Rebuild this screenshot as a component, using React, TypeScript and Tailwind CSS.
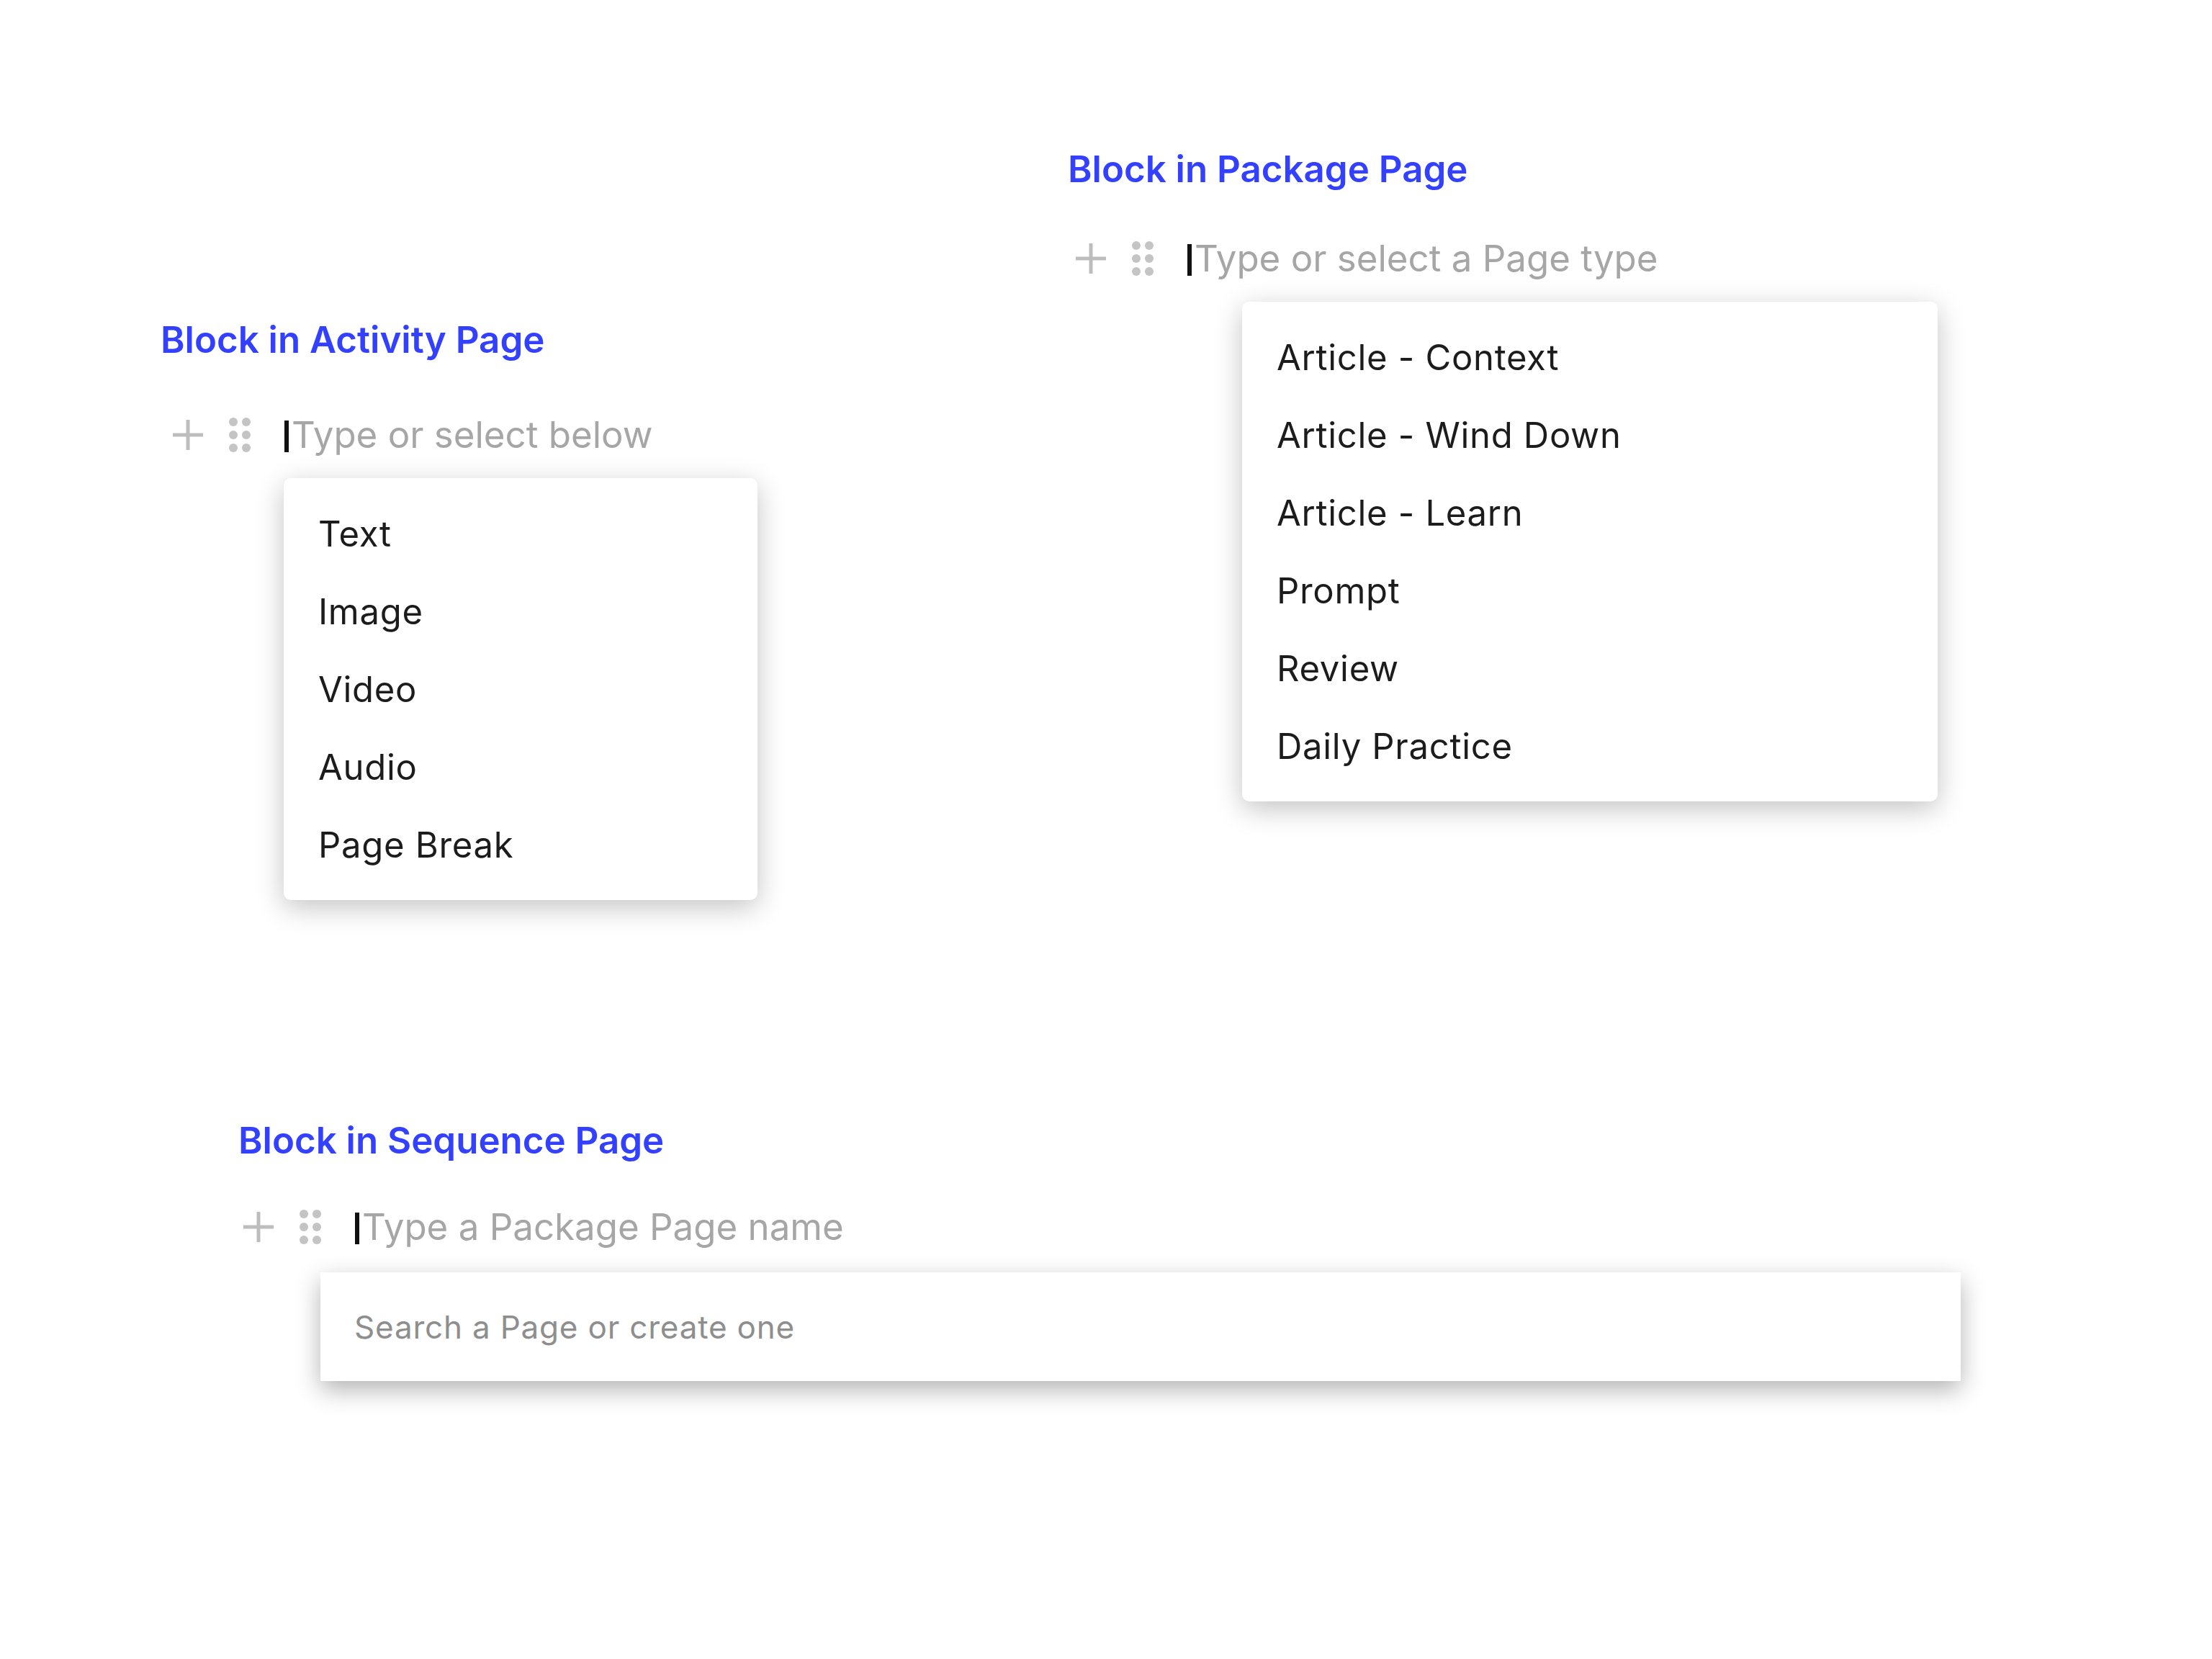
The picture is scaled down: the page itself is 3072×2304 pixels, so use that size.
import React from 'react';

const PlusIcon = () => (
  <svg width="42" height="42" viewBox="0 0 42 42" className="shrink-0">
    <rect x="18.5" y="0" width="5" height="42" fill="#bdbdbd" />
    <rect x="0" y="18.5" width="42" height="5" fill="#bdbdbd" />
  </svg>
);

const DragIcon = () => (
  <svg width="30" height="48" viewBox="0 0 30 48" className="shrink-0">
    {[6, 24, 42].map(cy => (
      <g key={cy}>
        <circle cx="6" cy={cy} r="6" fill="#c4c4c4" />
        <circle cx="24" cy={cy} r="6" fill="#c4c4c4" />
      </g>
    ))}
  </svg>
);

interface BlockRowProps {
  placeholder: string;
  offset: string;
}

const BlockRow: React.FC<BlockRowProps> = ({ placeholder, offset }) => (
  <div className={`flex items-center h-[60px] ${offset}`}>
    <PlusIcon />
    <div className="ml-[36px]">
      <DragIcon />
    </div>
    <span className="ml-[47px] mt-[4px] w-[6px] h-[44px] bg-[#111111] shrink-0" />
    <span className="ml-[4px] text-[51px] leading-[60px] text-[#a6a6a6] whitespace-nowrap">
      {placeholder}
    </span>
  </div>
);

const Title: React.FC<{ children: React.ReactNode }> = ({ children }) => (
  <h2 className="text-[51px] leading-[60px] font-semibold text-[#3341ff] whitespace-nowrap">
    {children}
  </h2>
);

const Menu: React.FC<{ items: string[]; className: string }> = ({ items, className }) => (
  <div className={`bg-white rounded-[10px] shadow-[0_10px_38px_rgba(0,0,0,0.24)] pt-[24px] pb-[22px] pl-[48px] ${className}`}>
    {items.map(item => (
      <div key={item} className="h-[108px] text-[49px] leading-[108px] tracking-[0.7px] text-[#1c1c1c] whitespace-nowrap">
        {item}
      </div>
    ))}
  </div>
);

const App: React.FC = () => {
  return (
    <div className="w-[3072px] h-[2304px] bg-white overflow-hidden font-['Inter','Open_Sans',sans-serif]">
      <div className="flex items-start">
        {/* Block in Activity Page */}
        <section className="ml-[223px] mt-[442px] w-[1260px] shrink-0">
          <Title>Block in Activity Page</Title>
          <div className="mt-[72px]">
            <BlockRow placeholder="Type or select below" offset="ml-[17px]" />
          </div>
          <Menu
            items={['Text', 'Image', 'Video', 'Audio', 'Page Break']}
            className="mt-[30px] ml-[171px] w-[658px]"
          />
        </section>

        {/* Block in Package Page */}
        <section className="mt-[205px]">
          <Title>Block in Package Page</Title>
          <div className="mt-[64px]">
            <BlockRow placeholder="Type or select a Page type" offset="ml-[11px]" />
          </div>
          <Menu
            items={[
              'Article - Context',
              'Article - Wind Down',
              'Article - Learn',
              'Prompt',
              'Review',
              'Daily Practice',
            ]}
            className="mt-[30px] ml-[242px] w-[966px]"
          />
        </section>
      </div>

      {/* Block in Sequence Page */}
      <section className="ml-[331px] mt-[304px]">
        <Title>Block in Sequence Page</Title>
        <div className="mt-[60px]">
          <BlockRow placeholder="Type a Package Page name" offset="ml-[7px]" />
        </div>
        <div className="mt-[33px] ml-[114px] w-[2278px] h-[151px] bg-white shadow-[0_12px_32px_rgba(0,0,0,0.3)] flex items-center pl-[47px]">
          <span className="text-[44px] tracking-[0.8px] text-[#8e8e8e] whitespace-nowrap">Search a Page or create one</span>
        </div>
      </section>
    </div>
  );
};

export default App;
